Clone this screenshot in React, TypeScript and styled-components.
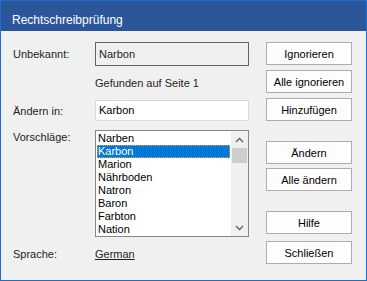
import React from "react";
import styled, { createGlobalStyle } from "styled-components";

const suggestions = [
  "Narben",
  "Karbon",
  "Marion",
  "Nährboden",
  "Natron",
  "Baron",
  "Farbton",
  "Nation",
];

const App = () => {
  return (
    <>
      <GlobalStyle />
      <Window>
        <TitleBar>Rechtschreibprüfung</TitleBar>
        <Body>
          <Form>
            <Row>
              <Label>Unbekannt:</Label>
              <ReadOnlyField>Narbon</ReadOnlyField>
            </Row>
            <FoundNote>Gefunden auf Seite 1</FoundNote>
            <Row>
              <Label>Ändern in:</Label>
              <Field>Karbon</Field>
            </Row>
            <ListRow>
              <Label>Vorschläge:</Label>
              <ListBox>
                <Items>
                  {suggestions.map((s, i) => (
                    <Item key={s} $selected={i === 1}>
                      {s}
                    </Item>
                  ))}
                </Items>
                <ScrollBar>
                  <Arrow>
                    <svg width="9" height="6" viewBox="0 0 9 6">
                      <path d="M1 5 L4.5 1.5 L8 5" fill="none" stroke="#606060" strokeWidth="1.3" />
                    </svg>
                  </Arrow>
                  <Track>
                    <Thumb />
                  </Track>
                  <Arrow>
                    <svg width="9" height="6" viewBox="0 0 9 6">
                      <path d="M1 1 L4.5 4.5 L8 1" fill="none" stroke="#606060" strokeWidth="1.3" />
                    </svg>
                  </Arrow>
                </ScrollBar>
              </ListBox>
            </ListRow>
            <LangRow>
              <Label>Sprache:</Label>
              <LangLink>German</LangLink>
            </LangRow>
          </Form>
          <Buttons>
            <Button>Ignorieren</Button>
            <Button $gap={5}>Alle ignorieren</Button>
            <Button $gap={5}>Hinzufügen</Button>
            <Button $gap={20}>Ändern</Button>
            <Button $gap={4}>Alle ändern</Button>
            <Button $gap={20}>Hilfe</Button>
            <Button $gap={7}>Schließen</Button>
          </Buttons>
        </Body>
      </Window>
    </>
  );
};

export default App;

const GlobalStyle = createGlobalStyle`
  body {
    margin: 0;
    background: #f0f0f0;
    font-family: "Liberation Sans", Arial, sans-serif;
  }
`;

const Window = styled.div`
  width: 367px;
  height: 281px;
  box-sizing: border-box;
  border: 1px solid #1e6fcb;
  background: #f0f0f0;
  display: flex;
  flex-direction: column;
`;

const TitleBar = styled.div`
  height: 30px;
  background: #2b579a;
  color: #ffffff;
  font-size: 12px;
  line-height: 14px;
  padding: 12px 0 0 11px;
  box-sizing: border-box;
`;

const Body = styled.div`
  flex: 1;
  display: flex;
  padding: 11px 0 0 12px;
`;

const Form = styled.div`
  display: flex;
  flex-direction: column;
  width: 236px;
`;

const Row = styled.div`
  display: flex;
  align-items: center;
`;

const ListRow = styled.div`
  display: flex;
  align-items: flex-start;
  margin-top: 9px;
`;

const LangRow = styled(Row)`
  margin-top: 10px;
`;

const Label = styled.div`
  width: 82px;
  font-size: 11px;
  color: #1e1e1e;
  line-height: 14px;
`;

const ReadOnlyField = styled.div`
  width: 154px;
  height: 24px;
  box-sizing: border-box;
  border: 1px solid #646464;
  background: #f0f0f0;
  font-size: 11px;
  color: #1e1e1e;
  padding: 0 3px;
  line-height: 22px;
`;

const Field = styled(ReadOnlyField)`
  height: 21px;
  line-height: 19px;
  border-color: #d9d9d9;
  background: #ffffff;
  color: #000000;
`;

const FoundNote = styled.div`
  margin: 10px 0 10px 82px;
  font-size: 11px;
  color: #1e1e1e;
  line-height: 14px;
`;

const ListBox = styled.div`
  width: 154px;
  height: 107px;
  box-sizing: border-box;
  border: 1px solid #828790;
  background: #ffffff;
  display: flex;
  overflow: hidden;
`;

const Items = styled.div`
  flex: 1;
  padding: 1px 1px 0 1px;
`;

const Item = styled.div<{ $selected?: boolean }>`
  height: 13px;
  line-height: 13px;
  font-size: 11px;
  padding-left: 1px;
  color: ${(p) => (p.$selected ? "#ffffff" : "#000000")};
  background: ${(p) => (p.$selected ? "#0078d7" : "transparent")};
  outline: ${(p) => (p.$selected ? "1px dotted #f2a33a" : "none")};
  outline-offset: -1px;
`;

const ScrollBar = styled.div`
  width: 17px;
  background: #f0f0f0;
  display: flex;
  flex-direction: column;
`;

const Arrow = styled.div`
  height: 17px;
  display: flex;
  align-items: center;
  justify-content: center;
`;

const Track = styled.div`
  flex: 1;
  padding: 0 1px;
`;

const Thumb = styled.div`
  height: 15px;
  background: #cdcdcd;
`;

const LangLink = styled.span`
  font-size: 11px;
  color: #1e1e1e;
  text-decoration: underline;
  line-height: 14px;
`;

const Buttons = styled.div`
  display: flex;
  flex-direction: column;
  margin-left: 17px;
`;

const Button = styled.button<{ $gap?: number }>`
  width: 86px;
  height: 23px;
  margin-top: ${(p) => p.$gap ?? 0}px;
  box-sizing: border-box;
  border: 1px solid #adadad;
  background: #fdfdfd;
  font-family: "Liberation Sans", Arial, sans-serif;
  font-size: 11px;
  color: #000000;
  padding: 0;
`;
